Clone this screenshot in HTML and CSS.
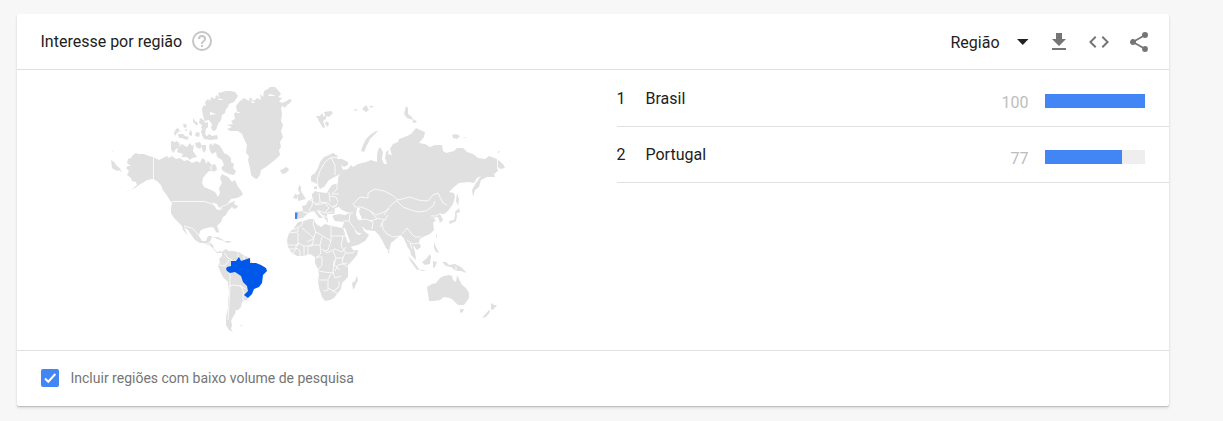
FILE: index.html
```html
<!DOCTYPE html>
<html lang="pt-BR">
<head>
<meta charset="utf-8">
<title>Interesse por região</title>
<link rel="stylesheet" href="styles.css">
</head>
<body>
<section class="card">
  <header class="card-header">
    <h1 class="title">Interesse por região</h1>
    <svg class="help" viewBox="0 0 24 24"><path d="M11 18h2v-2h-2v2zm1-16a10 10 0 1 0 0 20 10 10 0 0 0 0-20zm0 18a8 8 0 1 1 0-16 8 8 0 0 1 0 16zm0-14a4 4 0 0 0-4 4h2a2 2 0 1 1 4 0c0 2-3 1.750-3 5h2c0-2.250 3-2.500 3-5a4 4 0 0 0-4-4z"/></svg>
    <div class="actions">
      <span class="select">Região</span>
      <svg class="caret" viewBox="0 0 12 6"><path d="M0 0h11.500L5.750 6z"/></svg>
      <svg class="action download" viewBox="0 0 24 24"><path d="M19 9h-4V3H9v6H5l7 7 7-7zM5 18v2h14v-2H5z"/></svg>
      <svg class="action code" viewBox="0 0 24 24"><path d="M9.400 16.600 4.800 12l4.600-4.600L8 6l-6 6 6 6 1.400-1.400zm5.200 0 4.600-4.600-4.600-4.600L16 6l6 6-6 6-1.400-1.400z"/></svg>
      <svg class="action share" viewBox="0 0 24 24"><path d="M18 16.080c-.76 0-1.440.3-1.960.77L8.910 12.700c.05-.23.090-.46.090-.7s-.04-.47-.09-.7l7.050-4.110c.54.5 1.250.81 2.040.81a3 3 0 1 0-3-3c0 .24.040.47.090.7L8.040 9.810A3 3 0 1 0 6 15c.79 0 1.500-.31 2.040-.81l7.120 4.160c-.05.21-.08.430-.08.650A2.920 2.920 0 1 0 18 16.080z"/></svg>
    </div>
  </header>
  <div class="card-body">
    <svg class="map" viewBox="17 70 600 280" role="img" aria-label="Mapa">
      <g class="land">
        <path d="M127 175L129 171 126 168 128 166 131 166 127 163 128 159 131 158 133 155 136 153 138 154 144 154 149 156 153 157 159 160 163 158 167 156 169 158 172 156 176 159 180 158 184 161 188 160 192 163 197 161 200 163 202 158 205 160 206 164 208 161 212 165 210 168 212 171 209 171 206 174 203 178 202 183 204 187 209 189 215 192 218 197 220 193 219 188 222 183 220 178 222 174 228 177 232 182 235 180 238 187 240 189 243 194 241 196 237 198 231 199 228 203 235 201 234 204 238 206 237 208 234 209 232 207 228 211 226 215 223 217 221 222 217 226 219 231 218 233 216 232 214 228 211 227 207 228 203 229 200 231 199 236 202 241 206 241 208 236 212 236 211 240 209 242 213 245 214 249 217 252 221 251 222 253 217 253 213 249 210 246 204 243 200 243 195 240 192 236 188 230 184 227 187 234 188 236 183 230 182 226 178 222 174 218 171 213 171 208 172 203 169 199 166 194 162 190 161 185 157 181 153 179 147 180 144 182 139 185 135 188 131 190 137 185 136 182 132 181 131 178z"/>
        <path d="M111 160l3 2 3 4 4 3-3 2-3-1-3-2zM119 170l3 1-1 1zM112 151l1 0 0 1zM132 189l-4 2-3 1zM165 190l2 3 3 4-2-1zM171 141L175 142 177 141 180 144 179 147 175 150 173 153 171 149zM178 148L182 144 187 147 190 143 192 146 194 145 193 151 197 157 192 158 190 160 187 157 181 157 183 154 177 152zM190 130l2 2 0 4-3-1zM183 134l2 2 4 1-2 3-5-2-3 0-1-4 3 0zM174 133l2-4 2-1 2 3-3 2-2 3zM183 124l3 0 1 3-3 1zM184 130l3-1 0 2zM193 118l2 3 3 2-1 3-4-4zM196 132l4 1-1 4-4-1zM202 129l4 1-1 3 2 5-4-2-2-4zM195 143l5-1 2 4-2 3-4-2zM202 145l4 0 0 5-2 3-2-4zM200 118l4 2 1 3 3-1 0 5-3 3-4-2 1-3-3-2z"/>
        <path d="M202 108L204 105 206 106 205 102 208 99 210 101 211 97 215 99 216 95 219 97 218 93 222 92 226 91 231 91 235 92 238 96 236 99 234 102 229 104 228 107 226 109 225 113 222 115 221 120 218 124 216 130 213 131 211 128 212 124 209 120 205 121 203 116zM202 135l5 1 2-2 3 2 5-1 1 4-7 1-7-1zM209 146L211 143 213 146 214 143 219 145 222 149 224 153 228 155 231 158 231 162 234 164 233 168 236 171 234 175 229 174 223 171 221 168 224 165 222 160 217 157 216 152 212 154 210 151zM213 164l3 1 1 5-4 2-2-4z"/>
        <path d="M227 125L233 124 231 121 235 119 234 114 237 111 236 106 239 102 244 98 249 101 250 97 254 101 257 98 261 100 260 94 263 97 264 91 268 89 270 87 275 87 278 90 281 94 278 97 282 98 279 102 284 103 281 108 282 114 281 121 283 125 281 131 283 137 280 142 281 147 279 150 280 155 276 159 271 163 266 167 261 170 260 175 257 179 254 178 251 175 250 168 248 160 249 156 246 153 247 145 244 139 242 134 238 131 230 131 227 129 232 127zM282 105l2-3 3-1 2-2 3 1-2 3-3 2-2 3zM280 170l3-1 3-2 2 1 1 2-3 3-4 1z"/>
        <path d="M222 252L224 250 227 249 228 251 233 251 239 252 243 255 250 258 252 263 250 293 247 300 242 302 241 307 238 310 236 310 235 314 233 317 231 321 232 325 231 329 233 332 229 330 226 325 226 317 228 308 228 301 229 292 228 282 223 277 220 271 218 266 220 262 219 259 222 256zM213 237l5 0 7 4-5-1zM224 241l5 0 3 1-5 1zM240 325l3 0-2 1z"/>
        <path d="M311 181L311 176 315 173 318 168 320 162 324 157 329 155 333 153 338 156 337 159 342 159 348 162 348 165 344 167 341 165 343 170 348 169 351 165 353 167 358 164 366 162 371 160 377 162 377 155 378 150 380 147 383 152 382 159 384 164 387 164 385 158 386 152 389 150 388 154 392 155 390 149 393 144 398 142 399 139 407 136 411 134 416 128 420 130 425 132 424 137 419 143 425 144 430 147 435 145 442 145 443 151 446 153 454 151 457 148 463 148 467 152 473 154 478 158 485 159 489 156 497 159 503 164 505 168 500 169 497 166 498 171 494 174 495 177 487 177 481 180 479 187 475 190 473 197 472 190 476 183 481 176 477 178 474 183 469 182 459 183 454 187 449 192 454 193 455 197 453 204 448 211 444 214 440 214 443 220 440 223 438 217 433 218 436 220 433 223 434 230 430 234 423 237 420 239 419 242 421 247 417 250 413 245 415 252 416 260 411 255 410 250 408 248 406 243 404 239 401 235 397 238 391 243 389 251 386 248 382 240 379 235 375 231 366 230 362 226 364 231 369 235 365 241 358 245 350 247 346 239 342 229 344 222 335 221 332 216 337 214 327 214 328 223 324 217 320 212 316 210 323 218 319 218 314 211 308 213 303 218 297 219 295 218 295 212 303 211 302 206 306 205 308 201 312 199 312 194 315 191 318 192 327 193 329 189 332 185 338 183 338 178 340 174 329 180 324 187 320 189 317 184z"/>
        <path d="M298 198L298 195 300 193 298 190 299 185 301 187 301 191 304 196 306 199 298 201zM295 194l3 1-1 4-4-1zM314 187l3-1 0 3-3 0zM316 116l4 0 2-3 2 4 3-4-1 6-3 2 2 6-2 1-3-5-2-4zM324 112l7-1 2 2-4 4-4-2zM326 121l3 2-1 4-3-3zM353 110l5-1-2 2zM362 109l4-4 3 5-3 2zM369 106l5 0-3 2zM361 151L363 145 366 139 370 135 376 131 378 131 374 135 370 139 367 145 364 152zM404 114l2-8 2 2 0 6 4 3 1 3-6-2zM412 122l2-3 3 3-2 1zM452 135l4-1 4 2-3 3-4-1zM463 137l4 1-3 0zM497 152l3-1-1 2zM457 193l2 6-1 7-2-5zM455 212l4-4 1 4-5 2zM449 221L454 220 455 216 456 212 457 216 456 221 450 224zM436 233l1 3-1 2zM434 242l2 5 3 6-3-1-2-4zM408 256l6 6 5 7-2 1-6-8zM418 269l9 2-5 0zM411 250l3 3 2 6-3-3zM422 262l4-3 4-5 1 3-1 7-5 1zM433 261l4 1-2 5-2 1zM442 262l4 0 3 3 6-1 6 3 6 6-6-2-5 0-5-4-5-1zM388 250l2 3-2 0z"/>
        <path d="M427 287L432 284 436 283 440 278 444 276 449 275 452 276 453 280 456 282 457 275 460 281 462 285 466 288 469 293 469 298 464 305 458 305 453 300 450 298 444 297 440 300 434 301 429 301 428 294zM460 309l4 0-2 4-2-1zM491 303l3 2 3 0-4 5-2-1zM489 310l1 2-4 5-4 1zM353 289L352 283 355 281 357 276 358 280 354 289z"/>
        <path d="M298 222L304 221 309 219 314 219 316 224 321 227 325 224 332 226 342 228 344 234 347 241 351 247 353 250 358 250 357 255 352 261 348 265 348 272 348 277 342 283 341 289 337 294 334 298 330 300 325 301 322 297 319 288 318 281 319 275 318 269 315 263 315 257 310 254 304 256 297 256 291 252 288 247 287 240 289 233 294 228z"/>
      </g>
      <path class="sea" d="M335 208l4-1 3 3 7 3-4 2-6-1-5 1zM357 208l3 0-1 4 3 7-4 1-2-5zM212 202l5 2 2 4 4 1-4 1-3-1-1-3zM343 228l2 0 5 14-2 1zM354 228l4 5 4 0-3 2-3-2zM236 111l5 2-4 0zM251 100l4 3-3 0zM270 94l6 2-8 0zM210 112l6 2-6 1zM218 98l6 2-5 0z"/>
      <path class="border" d="M153.500 156v24l7 6 7 13M172 201.500h33l8 3 5 4 9-4 6-4M184 226l8 2 5 5 3 4M206 244l3-1 1 4 4 2M224 253l4 5 4 2-1 8M219 265l6 1 4-6M230 270l0 16-2 34M229 286l5-1 7 1 3 8 M238 251l0 6 M244 256v5M240 286l6 3M243 294l0 6 6 2M318 188l-1-8 3-9 5-9 5-4 8-1M331 158l4 7 0 10M337 181v8l-5 5 7 0M330 202l-1-10M310 200l8 5 7-2 4 5-4 4M303 212l5 1M313 197l-1 9-3 4 3 3M319 193l1 9-5 3M320 202l8 1 4 4 5-2M318 210l7 3 8-1M323 215l5 3 5-1M330 196l6 1 2 5M338 203l-5 5M353 213l-8 0M354 203l6-6 8 1 0-5 7-4 9 2 8 4 6 5M353 203l2 4 6 0M350 214l-1 7-6 0M349 221l5 7M359 220l7-1 7 3-1 7M361 207l8 3 7 5 8-3 5-4M370 211l7 8-7 2M377 218l8 2 3-5M384 220l-4 7M382 222l1 7 4 5 6 3 7-1 4 3M389 208l-5 7M397 200l5-1 8-2 8 3 10 1 5-6 5-2 5 10 4 2M397 201l6 6 5 2 10 3 8-1 7-5 2-5M397 200l-8 7M402 234l5-6 4 5 4 4 6 0M407 240l5 4 8-1M410 243l2 6M497.500 159v10M441 213l-5 3-5 0M456 266v8"/>
      <path class="border" d="M303 221l-1 4-9 5M298 228l0 4-10 1M302 228l12 10-2 8-8 0M298 233l0 12-10 0M314 219l-1 5 3 9M316 232l-3 7-6 3M316 232l15 9M331 226v15M331 236h15M331 241l-3 9-4 1M322 237l-2 8-11 0M288 249l7 0 3-6 6 3M293 253l4-5 3 3 0 5M304 246l0 10M308 246v9M320 245l1 8-5 6M322 249l5 4 8-4 7 3 4-5M343 236l-2 10 5 7 7 0 3-4M345 253l-2 5-7 0-3-7M343 258l-1 5 6 4M336 258l-2 7 6 5M334 260l-1 13-9-1-5-1M322 257l0 8-4 5M316 257h6M347 263l-9 2-3 6M333 272l2 6 6-2M319 280h10M328 281v9l-4 1M328 288l5 3 6-4 0-6M333 291l4 2M331 274l-3 5"/>
      <path class="brazil" d="M226 269L227 267 231 266V261L236 261 239 257 241 261 247 259 250 258 250 263 256 263 261 265 266 268 267 271 263 275 262 283 259 287 254 289 252 294 248 298 244 295 248 291 247 286 243 282 241 276 235 272 230 273 227 271z"/>
      <path class="portugal" d="M295 212.500h2.500v2l-.5 4.500H295z"/>
    </svg>
    <ol class="regions">
      <li class="region"><span class="rank">1</span><span class="name">Brasil</span><span class="value">100</span><span class="bar"><span class="fill" style="width:100%"></span></span></li>
      <li class="region"><span class="rank">2</span><span class="name">Portugal</span><span class="value">77</span><span class="bar"><span class="fill" style="width:77%"></span></span></li>
    </ol>
  </div>
  <footer class="card-footer">
    <span class="checkbox"><svg viewBox="0 0 18 18"><path d="M4 9.500l3.300 3.200 7-7.700"/></svg></span>
    <span>Incluir regiões com baixo volume de pesquisa</span>
  </footer>
</section>
</body>
</html>
```

FILE: styles.css
```css
* { box-sizing: border-box; }
body {
  min-height: 421px;
  margin: 0;
  padding: 14px 0 0 17px;
  background: #f7f7f7;
  color: #212121;
  font: 16px/24px Roboto, sans-serif;
}
svg { display: block; flex: none; }
.card {
  width: 1152px;
  height: 392px;
  background: #fff;
  border-radius: 2px;
  box-shadow: 0 1px 1px rgba(0, 0, 0, .14), 0 2px 3px rgba(0, 0, 0, .12);
}
.card-header {
  display: flex;
  align-items: center;
  height: 56px;
  padding: 0 18.500px 0 23.500px;
  border-bottom: 1px solid #e0e0e0;
}
.title { margin: 0; font-size: 16px; font-weight: 400; }
.help { width: 24px; height: 24px; margin: -1px 0 0 7.500px; fill: #c6c6c6; }
.actions { display: flex; align-items: center; margin-left: auto; padding-top: 1px; }
.select { padding-top: 1px; }
.caret { width: 12px; height: 6px; margin: 0 18px 0 17px; fill: #212121; }
.action { width: 24px; height: 24px; fill: #757575; }
.action + .action { margin-left: 16px; }
.card-body { display: flex; height: 280px; }
.map { width: 600px; height: 280px; }
.land { fill: #e0e0e0; }
.sea { fill: #fff; }
.border { fill: none; stroke: #fff; stroke-width: .8; stroke-linejoin: round; }
.brazil { fill: #0058eb; }
.portugal { fill: #4285f4; }
.regions { flex: 1; margin: 0; padding: 0; list-style: none; }
.region {
  display: flex;
  align-items: center;
  height: 56px;
  padding-right: 24px;
  border-bottom: 1px solid #e0e0e0;
}
.region:first-child { height: 57px; padding-top: 1px; }
.region:first-child .bar { margin-top: 4px; }
.rank { width: 29px; margin-left: -.5px; }
.name { flex: 1; }
.value { padding-top: 8px; margin-right: 16.500px; color: #bdbdbd; }
.bar { width: 100px; height: 14px; margin-top: 5px; background: #eee; }
.fill { display: block; height: 100%; background: #4285f4; }
.card-footer {
  display: flex;
  align-items: center;
  height: 56px;
  padding: 0 24px 2px;
  border-top: 1px solid #e0e0e0;
  color: #757575;
  font-size: 14px;
}
.checkbox { width: 18px; height: 18px; margin-right: 11.500px; border-radius: 2px; background: #4285f4; }
.checkbox path { fill: none; stroke: #fff; stroke-width: 2; }
```
